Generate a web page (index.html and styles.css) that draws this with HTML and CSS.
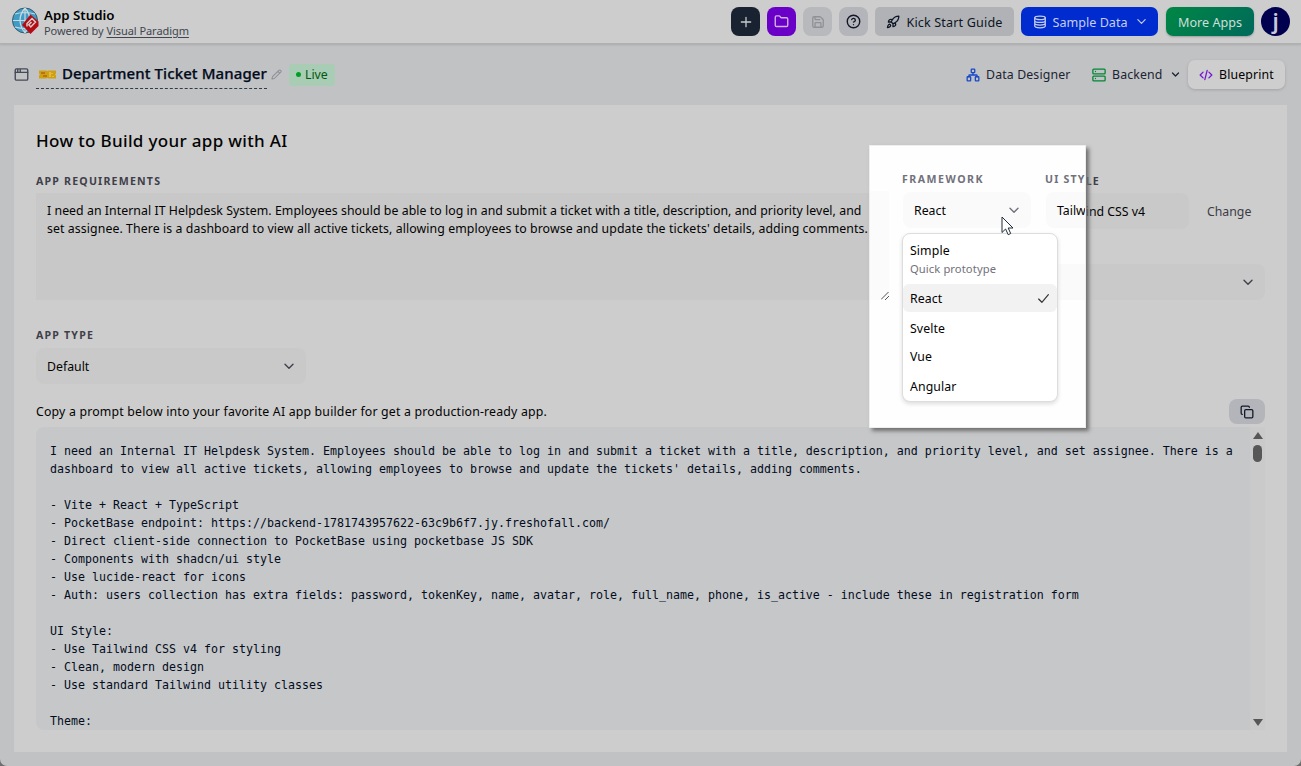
FILE: index.html
```html
<!DOCTYPE html>
<html lang="en">
<head>
<meta charset="utf-8">
<title>App Studio</title>
<link rel="stylesheet" href="styles.css">
</head>
<body>
<div class="app">
  <header class="topbar">
    <svg class="logo" viewBox="0 0 28 28">
      <circle cx="13" cy="13.500" r="12.500" fill="#3f9cc6" stroke="#35596a"/>
      <path d="M13 1v25M1 13.500h24M3 7q10-3 20 0M3 20q10 3 20 0M13 1Q3 13 13 26M13 1q10 12 0 25" fill="none" stroke="#ccd9df" stroke-width="1.200"/>
      <path d="M18.500 7.500 26.500 14.500 26.500 19 18.500 27 10 18z" fill="#b40c14"/>
      <path d="M15 19.500v-3L20 11.500l3.500 3.500-4.700 5-2-2.200 2.700-2.800" fill="none" stroke="#d5cccc" stroke-width="1.500"/>
    </svg>
    <div class="brand">
      <div class="brand-name"><span>App Studio</span></div>
      <div class="brand-sub">Powered by <u>Visual Paradigm</u></div>
    </div>
    <nav class="actions">
      <button class="sq dark"><svg class="ic" viewBox="0 0 24 24"><path d="M4 12h16M12 4v16"/></svg></button>
      <button class="sq purple"><svg class="ic" viewBox="0 0 24 24"><path d="M20 20a2 2 0 0 0 2-2V8a2 2 0 0 0-2-2h-7.900a2 2 0 0 1-1.690-.9L9.600 3.900A2 2 0 0 0 7.930 3H4a2 2 0 0 0-2 2v13a2 2 0 0 0 2 2Z"/></svg></button>
      <button class="sq muted"><svg class="ic" viewBox="0 0 24 24"><path d="M15.200 3a2 2 0 0 1 1.400.6l3.800 3.800a2 2 0 0 1 .6 1.400V19a2 2 0 0 1-2 2H5a2 2 0 0 1-2-2V5a2 2 0 0 1 2-2zM17 21v-7a1 1 0 0 0-1-1H8a1 1 0 0 0-1 1v7M7 3v4a1 1 0 0 0 1 1h7"/></svg></button>
      <button class="sq help"><svg class="ic" viewBox="0 0 24 24"><circle cx="12" cy="12" r="10"/><path d="M9.090 9a3 3 0 0 1 5.830 1c0 2-3 3-3 3M12 17h.01"/></svg></button>
      <button class="btn guide"><svg class="ic" viewBox="0 0 24 24"><path d="M4.500 16.500c-1.500 1.260-2 5-2 5s3.740-.5 5-2c.71-.84.7-2.130-.09-2.910a2.180 2.180 0 0 0-2.910-.09zM12 15l-3-3a22 22 0 0 1 2-3.950A12.880 12.880 0 0 1 22 2c0 2.720-.78 7.500-6 11a22.350 22.350 0 0 1-4 2zM9 12H4s.55-3.030 2-4c1.620-1.080 5 0 5 0M12 15v5s3.030-.55 4-2c1.080-1.620 0-5 0-5"/></svg><span>Kick Start Guide</span></button>
      <button class="btn sample"><svg class="ic" viewBox="0 0 24 24"><ellipse cx="12" cy="5" rx="9" ry="3"/><path d="M3 5v14a9 3 0 0 0 18 0V5M3 9.700a9 3 0 0 0 18 0M3 14.300a9 3 0 0 0 18 0"/></svg><span>Sample Data</span><svg class="ic chev" viewBox="0 0 24 24"><path d="m4 8 8 8 8-8"/></svg></button>
      <button class="btn more"><span>More Apps</span></button>
      <div class="avatar">j</div>
    </nav>
  </header>

  <div class="subbar">
    <svg class="ic window" viewBox="0 0 24 24"><rect x="2" y="3" width="20" height="18" rx="2"/><path d="M2 8.500h20M6 4v4M10 4v4"/></svg>
    <div class="project">
      <svg class="ticket" viewBox="0 0 17 9"><path d="M0 .5h7.500l1 .8 1-.8H17v3l-1 1 1 1v3H9.500l-1-.8-1 .8H0v-3l1-1-1-1z" fill="#d0a012"/><path d="M2 3h4M4 6h4" stroke="#a04d12" stroke-width="1"/><path d="M11 2v5M13 3v1M14 6v1" stroke="#efd66b" stroke-width="1"/></svg>
      <span>Department Ticket Manager</span>
    </div>
    <svg class="ic pencil" viewBox="0 0 24 24"><path d="M21.200 6.800a1 1 0 0 0-4-4L3.800 16.200a2 2 0 0 0-.5.800L2 21.400a.5.5 0 0 0 .6.600L7 20.700a2 2 0 0 0 .8-.5zM15 5l4 4"/></svg>
    <div class="live"><i></i><span>Live</span></div>
    <div class="tabs">
      <div class="tab designer"><svg class="ic blue" viewBox="0 0 24 24"><rect x="16" y="15" width="6" height="7" rx="1"/><rect x="2" y="15" width="6" height="7" rx="1"/><rect x="9" y="2" width="6" height="6" rx="1"/><path d="M5 15v-2a1 1 0 0 1 1-1h12a1 1 0 0 1 1 1v2M12 12V8"/></svg><span>Data Designer</span></div>
      <div class="tab backend"><svg class="ic green" viewBox="0 0 24 24"><rect x="1.500" y="2" width="21" height="8" rx="1.500"/><rect x="1.500" y="14" width="21" height="8" rx="1.500"/><path d="M6 6h.01M6 18h.01"/></svg><span>Backend</span><svg class="ic tiny" viewBox="0 0 24 24"><path d="m4 8 8 8 8-8"/></svg></div>
      <div class="tab active"><svg class="ic violet" viewBox="0 0 24 24"><path d="m17 17 5-5-5-5M7 7l-5 5 5 5M14 4l-4 16"/></svg><span>Blueprint</span></div>
    </div>
  </div>

  <main class="card">
    <h1><span>How to Build your app with AI</span></h1>
    <div class="settings">
      <section class="requirements">
        <div class="label">APP REQUIREMENTS</div>
        <div class="textarea"><div class="r1">I need an Internal IT Helpdesk System. Employees should be able to log in and submit a ticket with a title, description, and priority level, and</div><div class="r2">set assignee. There is a dashboard to view all active tickets, allowing employees to browse and update the tickets' details, adding comments.</div></div>
      </section>
      <section class="options">
        <div class="style-head"><div class="label">UI STYLE</div></div>
        <div class="style-row"><div class="field style-field"><span>Tailwind CSS v4</span></div><span class="change">Change</span></div>
        <div class="field wide"><svg class="ic" viewBox="0 0 24 24"><path d="m4 8.500 8 8 8-8"/></svg></div>
      </section>
    </div>
    <section class="type">
      <div class="label">APP TYPE</div>
      <div class="field type-field"><span>Default</span><svg class="ic" viewBox="0 0 24 24"><path d="m4 8.500 8 8 8-8"/></svg></div>
    </section>
    <div class="copy-row"><span>Copy a prompt below into your favorite AI app builder for get a production-ready app.</span>
      <button class="copy"><svg class="ic" viewBox="0 0 24 24"><rect x="8" y="8" width="14" height="14" rx="2"/><path d="M4 16c-1.100 0-2-.9-2-2V4c0-1.100.9-2 2-2h10c1.100 0 2 .9 2 2"/></svg></button>
    </div>
    <div class="prompt">
<pre>I need an Internal IT Helpdesk System. Employees should be able to log in and submit a ticket with a title, description, and priority level, and set assignee. There is a
dashboard to view all active tickets, allowing employees to browse and update the tickets' details, adding comments.

- Vite + React + TypeScript
- PocketBase endpoint: https://backend-1781743957622-63c9b6f7.jy.freshofall.com/
- Direct client-side connection to PocketBase using pocketbase JS SDK
- Components with shadcn/ui style
- Use lucide-react for icons
- Auth: users collection has extra fields: password, tokenKey, name, avatar, role, full_name, phone, is_active - include these in registration form

UI Style:
- Use Tailwind CSS v4 for styling
- Clean, modern design
- Use standard Tailwind utility classes

Theme:</pre>
      <div class="scroll"><i class="up"></i><i class="thumb"></i><i class="down"></i></div>
    </div>
  </main>

  <aside class="spotlight">
    <div class="spot-area"><svg viewBox="0 0 8 8"><path d="M0 7.500 7.500 0M4 8l4-4" fill="none" stroke="#555" stroke-width="1"/></svg></div>
    <div class="spot-main">
      <div class="spot-labels"><div class="label fw">FRAMEWORK</div><div class="label">UI STY</div></div>
      <div class="spot-fields">
        <div class="field select"><span>React</span><svg class="ic" viewBox="0 0 24 24"><path d="m4 8.500 8 8 8-8"/></svg></div>
        <div class="field style-field"><span>Tailwind CSS v4</span></div>
      </div>
      <div class="spot-wide"></div>
    </div>
    <div class="menu">
      <div class="opt first"><span>Simple</span><small>Quick prototype</small></div>
      <div class="opt selected"><span>React</span><svg class="ic" viewBox="0 0 24 24"><path d="m3 13 6 6L21 5"/></svg></div>
      <div class="opt">Svelte</div>
      <div class="opt vue">Vue</div>
      <div class="opt">Angular</div>
    </div>
    <svg class="cursor" viewBox="0 0 13 20"><path d="M1 1v15.500l3.600-3.500 2.600 5.700 2.500-1.200L7.200 12H12z" fill="#fff" stroke="#222b38"/></svg>
  </aside>
</div>
</body>
</html>
```
FILE: styles.css
```css
* { box-sizing: border-box; }
body { margin: 0; background: #6e6e6e; font-family: "Noto Sans", sans-serif; font-size: 12.3px; color: #030303; }
.app { position: relative; width: 1301px; height: 766px; overflow: hidden; background: #c1c2c4; border-radius: 0 0 7px 7px; }
button { font: inherit; border: 0; padding: 0; margin: 0; }
span, small { white-space: nowrap; }
.ic { width: 14px; height: 14px; flex: none; fill: none; stroke: currentColor; stroke-width: 2.2; stroke-linecap: round; stroke-linejoin: round; }

.topbar { height: 44px; display: flex; align-items: center; padding: 0 11px 0 12px; background: #cdcdcd; border-bottom: 1px solid #afb0b2; box-shadow: 0 1px 2px #aaaaac; }
.logo { width: 28px; height: 28px; margin-top: -1px; }
.brand { margin-left: 4px; line-height: 15px; padding-top: 3px; }
.brand-name { font-size: 13.3px; font-weight: 600; color: #000; }
.brand-sub { font-size: 11px; letter-spacing: -.06px; color: #41454f; white-space: nowrap; line-height: 16px; }
.brand-sub u { text-underline-offset: 2px; }
.actions { margin-left: auto; display: flex; align-items: center; }
.sq { width: 29px; height: 29px; border-radius: 8px; display: flex; align-items: center; justify-content: center; margin-right: 7px; }
.dark { background: #182230; color: #c7cace; }
.purple { background: #6a00c8; color: #d0b3e6; }
.muted { background: #b8b9bd; color: #8f9196; }
.help { background: #b4b5ba; color: #101828; }
.help .ic, .purple .ic { width: 15px; height: 15px; }
.btn { height: 29px; border-radius: 5px; display: flex; align-items: center; justify-content: center; font-size: 12.6px; }
.btn span { padding-top: 1px; }
.guide { width: 139px; background: #b1b2b6; color: #0c1524; gap: 6px; margin-right: 7px; letter-spacing: .15px; }
.sample { width: 137px; background: #002bce; color: #c6ceed; gap: 6px; border-radius: 7px; margin-right: 8px; }
.sample .chev { width: 11px; height: 11px; margin-left: 2px; stroke-width: 2.6; }
.more { width: 88px; border-radius: 7px; background: linear-gradient(135deg, #008744, #00695b); color: #cedfd9; box-shadow: 0 1px 2px #9c9d9d; margin-right: 7px; }
.avatar { width: 29px; height: 29px; border-radius: 50%; background: #00004f; color: #c8c8d8; text-align: center; font-size: 22px; line-height: 26px; font-weight: 600; }

.subbar { height: 61px; display: flex; align-items: center; padding: 0 16px 0 14px; }
.window { width: 15px; height: 15px; color: #454856; }
.project { margin-left: 7px; width: 231px; height: 29px; border-bottom: 1px dashed #333a49; display: flex; align-items: center; color: #030c1c; font-size: 15px; font-weight: 500; letter-spacing: .1px; }
.project span { padding-bottom: 2px; -webkit-text-stroke: .25px; }
.ticket { width: 17px; height: 9px; margin: 0 6px 0 3px; }
.pencil { width: 11px; height: 11px; color: #8d9097; margin-left: 4px; }
.live { margin-left: 7px; width: 46px; height: 22px; border-radius: 4px; background: #a9ccb5; color: #02580f; display: flex; align-items: center; gap: 4px; padding-left: 7px; }
.live i { width: 5px; height: 5px; border-radius: 50%; background: #009f22; }
.tabs { margin-left: auto; display: flex; align-items: center; color: #1b2433; letter-spacing: .15px; }
.tab { display: flex; align-items: center; gap: 6px; height: 29px; }
.designer { width: 126px; }
.backend { width: 96px; }
.tab .tiny { width: 9px; height: 9px; margin-left: 2px; stroke-width: 3.5; }
.blue { color: #1748c8; }
.green { color: #008634; }
.violet { color: #7517d5; }
.active { width: 97px; padding-left: 11px; background: #cecece; border-radius: 7px; color: #000; box-shadow: 0 1px 3px #a2a3a5; }

.card { width: 1273px; height: 647px; margin-left: 14px; padding: 24px 22px 22px; background: #cdcdcd; display: flex; flex-direction: column; }
h1 { margin: 0; height: 24px; line-height: 24px; font-size: 17px; font-weight: 500; letter-spacing: .33px; }
.label { font-size: 10.6px; line-height: 14px; font-weight: 700; letter-spacing: 1.2px; color: #3f3f49; white-space: nowrap; }
.settings { display: flex; height: 147px; padding-top: 21px; gap: 14px; }
.requirements { width: 853px; }
.textarea { margin-top: 5px; height: 107px; padding: 9px 11px; background: #c8c8c8; line-height: 18px; white-space: nowrap; font-size: 12.3px; }
.r1 { letter-spacing: .055px; }
.r2 { letter-spacing: .09px; }
.options { width: 362px; }
.style-head { padding-left: 142px; }
.style-row { display: flex; align-items: center; margin-top: 5px; padding-left: 143px; }
.field { height: 36px; display: flex; align-items: center; justify-content: space-between; background: #c9c9c9; border-radius: 8px; padding: 0 11px; }
.field .ic { width: 12px; height: 12px; margin-left: auto; color: #3f3f49; stroke-width: 2.8; }
.style-field { width: 143px; }
.change { margin-left: 18px; color: #3c3c47; }
.wide { margin-top: 35px; }
.type { margin-top: 28px; }
.type-field { width: 270px; margin-top: 6px; }
.copy-row { height: 25px; margin-top: 15px; display: flex; justify-content: space-between; align-items: center; letter-spacing: .19px; }
.copy { width: 36px; height: 25px; border-radius: 8px; background: #b4b5ba; color: #101828; display: flex; align-items: center; justify-content: center; }
.prompt { margin-top: 3px; height: 303px; display: flex; justify-content: space-between; background: #c6c7c9; border-radius: 8px 0 0 8px; overflow: hidden; }
pre { margin: 0; padding: 16px 14px 0; font: 11.630px/17.970px "DejaVu Sans Mono", monospace; color: #030c1c; }
.scroll { width: 15px; background: #cacaca; display: flex; flex-direction: column; align-items: center; }
.scroll i { display: block; }
.up { margin-top: 5px; border: 5px solid transparent; border-top: 0; border-bottom: 7px solid #575757; }
.thumb { margin-top: 6px; width: 9px; height: 17px; border-radius: 5px; background: #575757; }
.down { margin-top: auto; margin-bottom: 4px; border: 5px solid transparent; border-bottom: 0; border-top: 7px solid #575757; }

.spotlight { position: absolute; left: 869px; top: 145px; width: 217px; height: 283px; display: flex; background: #fefefe; border: 1px solid #eee; box-shadow: 3px 3px 4px #707070; }
.spot-area { width: 19px; height: 109px; margin-top: 45px; background: #fbfbfb; display: flex; align-items: flex-end; justify-content: flex-end; }
.spot-area svg { width: 8px; height: 8px; }
.spot-main { width: 196px; padding: 26px 0 0 13px; overflow: hidden; }
.spotlight .label { color: #71717b; }
.spot-labels { display: flex; }
.spotlight .fw { width: 143px; flex: none; letter-spacing: 1.5px; }
.spot-fields { display: flex; gap: 15px; margin-top: 6px; padding-left: 1px; }
.spotlight .field { background: #fafafa; flex: none; }
.select { width: 128px; }
.spotlight .field .ic { color: #71717b; }
.spot-wide { height: 36px; margin-top: 36px; background: #fafafa; }
.menu { position: absolute; left: 32px; top: 87px; width: 156px; height: 169px; border: 1px solid #ddd; border-radius: 8px; background: #fff; box-shadow: 0 2px 4px #ddd; letter-spacing: .1px; }
.opt { height: 29px; padding: 0 7px; line-height: 32px; }
.vue { line-height: 30px; }
.first { height: 50px; line-height: 18px; padding-top: 8px; }
.first span, .first small { display: block; }
.first small { font-size: 11.200px; color: #71717b; }
.selected { height: 28px; line-height: 29px; background: #f2f2f2; border-radius: 6px; display: flex; align-items: center; justify-content: space-between; margin-bottom: 1px; }
.selected .ic { width: 13px; height: 13px; color: #333; }
.cursor { position: absolute; left: 131px; top: 70px; width: 13px; height: 20px; }
```
